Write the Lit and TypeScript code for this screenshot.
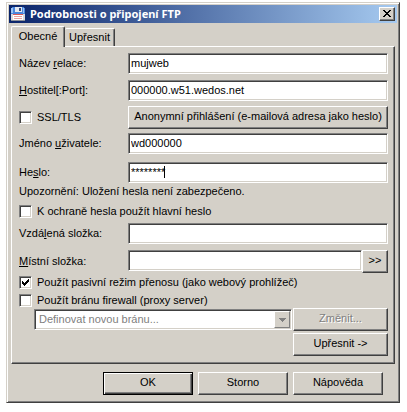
import { LitElement, html, css } from "lit";
import { customElement } from "lit/decorators.js";

@customElement("app-root")
export class AppRoot extends LitElement {
  static styles = css`
    :host {
      display: block;
      background: #fff;
      padding: 2px 6px 9px;
      font: 11px/13px "Liberation Sans", Arial, sans-serif;
      color: #000;
    }
    * { box-sizing: border-box; }
    button, input, select { font: inherit; color: inherit; margin: 0; border-radius: 0; }

    .window {
      border: 1px solid;
      border-color: #d4d0c8 #404040 #404040 #d4d0c8;
      box-shadow: inset 1px 1px #fff, inset -1px -1px #808080;
      background: #d4d0c8;
      padding: 2px;
      margin-right: 1px;
    }
    .titlebar {
      display: flex;
      align-items: center;
      height: 18px;
      padding: 0 2px 0 1px;
      background: linear-gradient(90deg, #0a246a, #a6caf0);
      color: #fff;
    }
    .logo { width: 16px; height: 16px; flex: none; }
    .title {
      flex: 1;
      margin: 0 0 0 4px;
      font: bold 11px/16px "Noto Sans", "Open Sans", sans-serif;
      white-space: nowrap;
    }
    .btn {
      height: 23px;
      padding: 0 0 2px;
      background: #d4d0c8;
      border: 1px solid;
      border-color: #fff #404040 #404040 #fff;
      box-shadow: inset -1px -1px #808080;
      text-align: center;
      white-space: nowrap;
    }
    .btn:disabled { color: #808080; text-shadow: 1px 1px #fff; }
    .close { display: grid; place-items: center; width: 16px; height: 14px; padding: 0 1px 1px 0; }

    .tabs { display: flex; align-items: flex-end; height: 23px; padding: 0 2px; }
    .tab {
      height: 18px;
      width: 50px;
      padding: 0;
      background: #d4d0c8;
      border: 1px solid;
      border-color: #fff #404040 transparent #fff;
      border-bottom: 0;
      border-radius: 2px 2px 0 0;
      box-shadow: inset -1px 0 #808080;
    }
    .tab.rest { border-left: 0; }
    .tab.active { position: relative; height: 21px; width: 54px; margin-bottom: -1px; padding-bottom: 2px; }

    .panel {
      margin: 0 2px;
      padding: 6px 6px 7px 7px;
      border: 1px solid;
      border-color: #fff #404040 #404040 #fff;
      box-shadow: inset -1px -1px #808080;
    }
    .row {
      display: grid;
      grid-template-columns: 109px 1fr;
      align-items: center;
      margin-bottom: 6px;
    }
    .row.snug { margin-bottom: 5px; }
    .row.tight { margin-bottom: 4px; }
    .row.loose { margin-bottom: 8px; }
    .row.flush { margin-bottom: 0; }
    .label { white-space: nowrap; }
    .field {
      width: 100%;
      min-width: 0;
      height: 21px;
      padding: 0 0 2px 2px;
      background: #fff;
      border: 1px solid;
      border-color: #808080 #fff #fff #808080;
      box-shadow: inset 1px 1px #404040, inset -1px -1px #d4d0c8;
      outline: 0;
    }
    .entry { position: relative; display: flex; }
    .caret { position: absolute; left: 36px; top: 4px; width: 1px; height: 12px; background: #000; }
    .more { width: 26px; flex: none; }

    .check { display: flex; align-items: center; gap: 5px; height: 18px; white-space: nowrap; }
    .box {
      appearance: none;
      flex: none;
      width: 13px;
      height: 13px;
      background: #fff;
      border: 1px solid;
      border-color: #808080 #fff #fff #808080;
      box-shadow: inset 1px 1px #404040, inset -1px -1px #d4d0c8;
    }
    .tick { position: relative; display: flex; }
    .mark { position: absolute; left: 3px; top: 3px; width: 7px; height: 7px; pointer-events: none; }
    .box:not(:checked) + .mark { display: none; }
    .note { margin: 0 0 3px; height: 16px; line-height: 16px; white-space: nowrap; }
    .hold { margin-bottom: 3px; }

    .gateway { display: flex; align-items: center; gap: 1px; margin: -1px 0 2px 15px; }
    .combo { display: flex; align-items: center; flex: 1; min-width: 0; padding: 1px; }
    .select {
      appearance: none;
      flex: 1;
      min-width: 0;
      height: 17px;
      padding: 0 0 0 3px;
      border: 0;
      background: transparent;
      color: #808080;
      opacity: 1;
    }
    .arrow { display: grid; place-items: center; width: 16px; height: 17px; padding: 0; border-color: #fff #808080 #808080 #fff; box-shadow: none; pointer-events: none; }
    .side { width: 95px; flex: none; }
    .end { display: flex; justify-content: flex-end; }

    .footer { display: flex; justify-content: flex-end; gap: 5px; padding: 8px 14px 5px 0; }
    .footer .btn { width: 90px; }
    .footer .default { border-color: #000; box-shadow: inset 1px 1px #fff, inset -1px -1px #404040, inset -2px -2px #808080; }
  `;

  private check(text: string, checked = false) {
    return html`<label class="check">
      <span class="tick">
        <input class="box" type="checkbox" .checked=${checked} />
        <svg class="mark" viewBox="0 0 7 7" shape-rendering="crispEdges" aria-hidden="true">
          <path d="M0 2h1v1h1v1h1v-1h1v-1h1v-1h1v-1h1v3h-1v1h-1v1h-1v1h-1v1h-1v-1h-1v-1h-1z" />
        </svg>
      </span>
      <span>${text}</span>
    </label>`;
  }

  render() {
    return html`
      <main class="window">
        <header class="titlebar">
          <svg class="logo" viewBox="0 0 16 16" shape-rendering="crispEdges" aria-hidden="true">
            <path fill="#4a86dc" d="M2 1h12v1h1v6H1V2h1z" />
            <path fill="#9cc4f4" d="M1 2h2v5H1zM13 2h1v5h-1z" />
            <path fill="#e4e8f0" d="M5 1h7v5H5z" />
            <path fill="#3a4c78" d="M9 2h2v3H9z" />
            <path fill="#d8d8dc" d="M1 8h14v6H1z" />
            <path fill="#fff" d="M3 8h10v6H3z" />
            <path fill="#d85858" d="M3 8h10v1H3z" />
            <path fill="#e8a0a0" d="M4 10h8v1H4zM4 12h8v1H4z" />
            <path fill="#8c9098" d="M1 14h14v1H1z" />
          </svg>
          <h1 class="title">Podrobnosti o připojení FTP</h1>
          <button class="btn close" aria-label="Zavřít">
            <svg width="8" height="7" viewBox="0 0 8 7" shape-rendering="crispEdges" aria-hidden="true">
              <path d="M0 0h2v1h1v1h2V1h1V0h2v1H7v1H6v1H5v1h1v1h1v1h1v1H6V6H5V5H3v1H2v1H0V6h1V5h1V4h1V3H2V2H1V1H0z" />
            </svg>
          </button>
        </header>

        <nav class="tabs" role="tablist">
          <button class="tab active" role="tab" aria-selected="true">Obecné</button>
          <button class="tab rest" role="tab" aria-selected="false">Upřesnit</button>
        </nav>

        <section class="panel">
          <div class="row">
            <label class="label" for="session">Název <u>r</u>elace:</label>
            <input class="field" id="session" type="text" value="mujweb" />
          </div>
          <div class="row snug">
            <label class="label" for="host"><u>H</u>ostitel[:Port]:</label>
            <input class="field" id="host" type="text" value="000000.w51.wedos.net" />
          </div>
          <div class="row tight">
            ${this.check("SSL/TLS")}
            <button class="btn">Anonymní přihlášení (e-mailová adresa jako heslo)</button>
          </div>
          <div class="row loose">
            <label class="label" for="user">Jméno <u>u</u>živatele:</label>
            <input class="field" id="user" type="text" value="wd000000" />
          </div>
          <div class="row flush">
            <label class="label" for="pass">He<u>s</u>lo:</label>
            <div class="entry">
              <input class="field" id="pass" type="text" value="********" />
              <span class="caret"></span>
            </div>
          </div>
          <p class="note">Upozornění: Uložení hesla není zabezpečeno.</p>
          <div class="hold">${this.check("K ochraně hesla použít hlavní heslo")}</div>
          <div class="row">
            <label class="label" for="remote">Vzdá<u>l</u>ená složka:</label>
            <input class="field" id="remote" type="text" />
          </div>
          <div class="row flush">
            <label class="label" for="local"><u>M</u>ístní složka:</label>
            <div class="entry">
              <input class="field" id="local" type="text" />
              <button class="btn more">&gt;&gt;</button>
            </div>
          </div>
          ${this.check("Použít pasivní režim přenosu (jako webový prohlížeč)", true)}
          ${this.check("Použít bránu firewall (proxy server)")}
          <div class="gateway">
            <div class="field combo">
              <select class="select" disabled aria-label="Brána firewall">
                <option>Definovat novou bránu...</option>
              </select>
              <span class="btn arrow">
                <svg width="7" height="4" viewBox="0 0 7 4" shape-rendering="crispEdges" aria-hidden="true">
                  <path fill="#808080" d="M0 0h7v1H6v1H5v1H4v1H3V3H2V2H1V1H0z" />
                </svg>
              </span>
            </div>
            <button class="btn side" disabled>Změnit...</button>
          </div>
          <div class="end"><button class="btn side">Upřesnit -&gt;</button></div>
        </section>

        <footer class="footer">
          <button class="btn default">OK</button>
          <button class="btn">Storno</button>
          <button class="btn">Nápověda</button>
        </footer>
      </main>
    `;
  }
}
